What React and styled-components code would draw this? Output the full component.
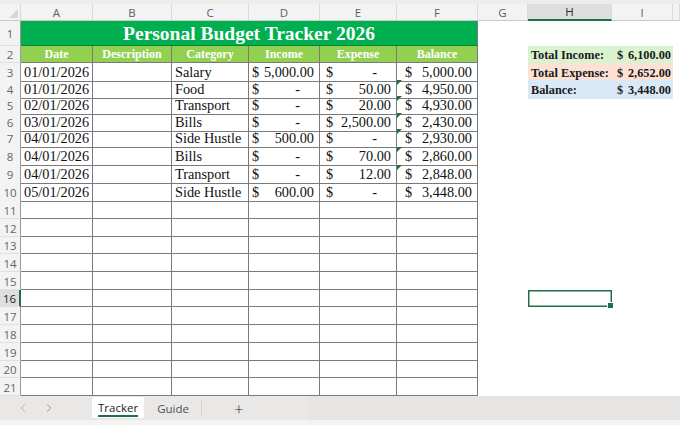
import styled, { createGlobalStyle } from 'styled-components';
import { ChevronLeft, ChevronRight } from 'lucide-react';

const GlobalStyle = createGlobalStyle`
  body {
    margin: 0;
    background: #fff;
    overflow: hidden;
  }
`

const COLS = '21px 72px 79px 77px 71px 77px 81px 50px 84px 61px 1fr';
const UI_FONT = '"Open Sans", "Noto Sans", sans-serif';
const SHEET_FONT = '"Liberation Serif", "Times New Roman", serif';
const LINE = '#7a7a7a';
const EXCEL_GREEN = '#1e7145';

const Window = styled.div`
  width: 680px;
  height: 425px;
  display: flex;
  flex-direction: column;
  background: #fff;
`

const TopStrip = styled.div`
  height: 4px;
  background: #eeecea;
`

const Sheet = styled.div`
  display: flex;
  flex-direction: column;
  flex: 1;
`

const Row = styled.div`
  display: grid;
  grid-template-columns: ${COLS};
  height: ${p => p.$h}px;
`

const Corner = styled.div`
  position: relative;
  background: #f3f3f3;
  border-right: 1px solid #d8d8d8;
  border-bottom: 1px solid #c9c9c9;
  &::after {
    content: '';
    position: absolute;
    right: 2px;
    bottom: 2px;
    border-left: 9px solid transparent;
    border-bottom: 9px solid #d6d6d6;
  }
`

const ColHead = styled.div`
  box-sizing: border-box;
  display: flex;
  align-items: center;
  justify-content: center;
  font: 11.5px ${UI_FONT};
  color: ${p => (p.$active ? '#2a2a2a' : '#5f5f5f')};
  background: ${p => (p.$active ? '#dedede' : '#f3f3f3')};
  border-right: 1px solid #dadada;
  border-bottom: ${p => (p.$active ? `2px solid ${EXCEL_GREEN}` : '1px solid #c9c9c9')};
`

const RowHead = styled.div`
  box-sizing: border-box;
  display: flex;
  align-items: center;
  justify-content: center;
  padding-top: 1px;
  font: 11.5px ${UI_FONT};
  color: ${p => (p.$active ? '#1f1f1f' : '#666')};
  background: ${p => (p.$active ? '#dedede' : '#f3f3f3')};
  border-bottom: 1px solid #e0e0e0;
  border-right: ${p => (p.$active ? `2px solid ${EXCEL_GREEN}` : '1px solid #9a9a9a')};
`

const Title = styled.div`
  grid-column: span 6;
  box-sizing: border-box;
  display: flex;
  align-items: center;
  justify-content: center;
  padding-top: 2px;
  background: #00b050;
  color: #fff;
  font: bold 19.5px ${SHEET_FONT};
  border-bottom: 1px solid #0c7f37;
  border-right: 1px solid ${LINE};
`

const HeadCell = styled.div`
  box-sizing: border-box;
  display: flex;
  align-items: center;
  justify-content: center;
  background: #92d050;
  color: #fff;
  font: bold 12px ${SHEET_FONT};
  border-right: 1px solid ${LINE};
  border-bottom: 1px solid ${LINE};
`

const Cell = styled.div`
  box-sizing: border-box;
  display: flex;
  align-items: center;
  padding: 1px 2px 0 3px;
  font: 14.3px ${SHEET_FONT};
  color: #111;
  white-space: nowrap;
  overflow: hidden;
  border-right: 1px solid ${LINE};
  border-bottom: 1px solid ${LINE};
`

const MoneyCell = styled(Cell)`
  position: relative;
  justify-content: space-between;
  padding: 1px ${p => p.$right}px 0 ${p => p.$pad}px;
  overflow: visible;

  &::before {
    content: '';
    display: ${p => (p.$flag ? 'block' : 'none')};
    position: absolute;
    top: 0;
    left: 0;
    border-top: 5px solid ${EXCEL_GREEN};
    border-right: 5px solid transparent;
  }
`

const Amount = styled.span`
  padding-right: ${p => (p.$dash ? 14 : 0)}px;
`

const Blank = styled.div`
  position: relative;
  box-shadow: ${p => (p.$selected ? `inset 0 0 0 1.5px ${EXCEL_GREEN}` : 'none')};

  &::after {
    content: '';
    display: ${p => (p.$selected ? 'block' : 'none')};
    position: absolute;
    right: -2px;
    bottom: -2px;
    width: 5px;
    height: 5px;
    background: ${EXCEL_GREEN};
    border: 1px solid #fff;
  }
`

const SumLabel = styled.div`
  display: flex;
  align-items: center;
  padding: 1px 0 0 3px;
  background: ${p => p.$tone};
  font: bold 12.3px ${SHEET_FONT};
  color: #1a1a1a;
  white-space: nowrap;
`

const SumValue = styled(SumLabel)`
  justify-content: space-between;
  padding: 1px 2px 0 5px;
`

const TabBar = styled.div`
  height: 24px;
  display: flex;
  align-items: stretch;
  background: #e9e8e6;
  font: 12px ${UI_FONT};
`

const Nav = styled.div`
  width: 92px;
  display: flex;
  align-items: center;
  gap: 12px;
  padding-left: 16px;
  box-sizing: border-box;
`

const Tab = styled.div`
  display: flex;
  align-items: center;
  padding: 0 ${p => (p.$active ? 6 : 12)}px 0 ${p => (p.$active ? 6 : 13)}px;
  margin-top: ${p => (p.$active ? 1 : 0)}px;
  margin-bottom: ${p => (p.$active ? 2 : 0)}px;
  background: ${p => (p.$active ? '#fff' : 'transparent')};
  color: ${p => (p.$active ? '#1b1b1b' : '#505050')};
  font-size: 11.5px;
  font-weight: ${p => (p.$active ? 500 : 400)};
  border-radius: 2px;

  span {
    padding-top: 2px;
    border-bottom: 2px solid ${p => (p.$active ? EXCEL_GREEN : 'transparent')};
  }
`

const Divider = styled.div`
  width: 1px;
  margin: 5px 0;
  background: #d3d2d0;
`

const AddButton = styled.div`
  width: 74px;
  display: flex;
  align-items: center;
  justify-content: center;
  font: 300 17px ${UI_FONT};
  color: #333;
`

const ScrollArea = styled.div`
  flex: 1;
  margin-left: 32px;
  background: #e6e5e3;
`

const BottomStrip = styled.div`
  height: 5px;
  background: #f4f3f2;
`

const heights = [25, 17, 17, 16, 17, 16, 18, 18, 18, 18, 18, 18, 17, 18, 18, 17, 18, 18, 18, 17, 18];

const entries = [
  { date: '01/01/2026', category: 'Salary', income: '5,000.00', expense: null, balance: '5,000.00' },
  { date: '01/01/2026', category: 'Food', income: null, expense: '50.00', balance: '4,950.00', flag: true },
  { date: '02/01/2026', category: 'Transport', income: null, expense: '20.00', balance: '4,930.00', flag: true },
  { date: '03/01/2026', category: 'Bills', income: null, expense: '2,500.00', balance: '2,430.00', flag: true },
  { date: '04/01/2026', category: 'Side Hustle', income: '500.00', expense: null, balance: '2,930.00', flag: true },
  { date: '04/01/2026', category: 'Bills', income: null, expense: '70.00', balance: '2,860.00', flag: true },
  { date: '04/01/2026', category: 'Transport', income: null, expense: '12.00', balance: '2,848.00', flag: true },
  { date: '05/01/2026', category: 'Side Hustle', income: '600.00', expense: null, balance: '3,448.00' },
];

const summary = {
  2: { label: 'Total Income:', value: '6,100.00', tone: '#d9f2d0' },
  3: { label: 'Total Expense:', value: '2,652.00', tone: '#fbe2d5' },
  4: { label: 'Balance:', value: '3,448.00', tone: '#dae9f8' },
};

const letters = ['A', 'B', 'C', 'D', 'E', 'F', 'G', 'H', 'I', ''];
const SELECTED_ROW = 16;

const Money = ({ value, flag, pad = 5, right = 5 }) => (
  <MoneyCell $flag={flag} $pad={pad} $right={right}>
    <span>$</span>
    <Amount $dash={!value}>{value || '-'}</Amount>
  </MoneyCell>
)

const SideCells = ({ row }) => {
  const s = summary[row];
  return (
    <>
      <Blank />
      {s ? (
        <>
          <SumLabel $tone={s.tone}>{s.label}</SumLabel>
          <SumValue $tone={s.tone}>
            <span>$</span>
            <span>{s.value}</span>
          </SumValue>
        </>
      ) : (
        <>
          <Blank $selected={row === SELECTED_ROW} />
          <Blank />
        </>
      )}
      <Blank />
    </>
  )
}

const App = () => {
  const emptyRows = [];
  for (let r = 11; r <= 21; r++) emptyRows.push(r);

  return (
    <Window>
      <GlobalStyle />
      <TopStrip />
      <Sheet>
        <Row $h={17}>
          <Corner />
          {letters.map((l, i) => (
            <ColHead key={i} $active={l === 'H'}>{l}</ColHead>
          ))}
        </Row>

        <Row $h={heights[0]}>
          <RowHead>1</RowHead>
          <Title>Personal Budget Tracker 2026</Title>
          <SideCells row={1} />
        </Row>

        <Row $h={heights[1]}>
          <RowHead>2</RowHead>
          {['Date', 'Description', 'Category', 'Income', 'Expense', 'Balance'].map(h => (
            <HeadCell key={h}>{h}</HeadCell>
          ))}
          <SideCells row={2} />
        </Row>

        {entries.map((e, i) => {
          const row = i + 3;
          return (
            <Row key={row} $h={heights[row - 1]}>
              <RowHead>{row}</RowHead>
              <Cell>{e.date}</Cell>
              <Cell />
              <Cell>{e.category}</Cell>
              <Money value={e.income} pad={3} right={5} />
              <Money value={e.expense} pad={6} right={5} />
              <Money value={e.balance} flag={e.flag} pad={8} right={5} />
              <SideCells row={row} />
            </Row>
          )
        })}

        {emptyRows.map(row => (
          <Row key={row} $h={heights[row - 1]}>
            <RowHead $active={row === SELECTED_ROW}>{row}</RowHead>
            <Cell />
            <Cell />
            <Cell />
            <Cell />
            <Cell />
            <Cell />
            <SideCells row={row} />
          </Row>
        ))}
      </Sheet>

      <TabBar>
        <Nav>
          <ChevronLeft size={14} strokeWidth={1.4} color="#a8a8a8" />
          <ChevronRight size={14} strokeWidth={1.4} color="#858585" />
        </Nav>
        <Tab $active><span>Tracker</span></Tab>
        <Tab><span>Guide</span></Tab>
        <Divider />
        <AddButton>+</AddButton>
        <ScrollArea />
      </TabBar>
      <BottomStrip />
    </Window>
  )
}

export default App
